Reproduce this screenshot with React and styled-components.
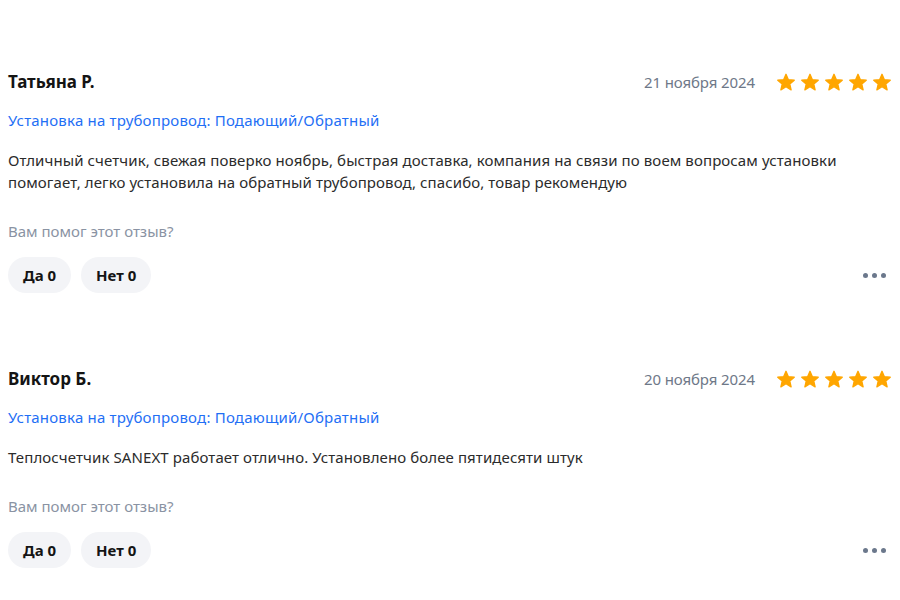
import React from "react";
import styled, { createGlobalStyle } from "styled-components";

const Global = createGlobalStyle`
  html, body { margin: 0; padding: 0; background: #ffffff; }
  body { font-family: "Noto Sans", "Open Sans", sans-serif; color: #2b2b2b; }
  * { box-sizing: border-box; }
`;

const List = styled.div`
  padding: 70px 8px 0 8px;
  width: 900px;
`;

const Review = styled.article`
  display: flex;
  flex-direction: column;
  margin-bottom: 74px;
  &:last-child { margin-bottom: 0; }
`;

const Header = styled.div`
  display: flex;
  align-items: center;
  justify-content: space-between;
  height: 24px;
`;

const Name = styled.div`
  font-size: 17px;
  font-weight: 700;
  color: #141414;
  line-height: 24px;
`;

const Meta = styled.div`
  display: flex;
  align-items: center;
  gap: 21px;
`;

const DateText = styled.span`
  font-size: 15px;
  letter-spacing: -0.1px;
  color: #6e7888;
  line-height: 20px;
`;

const Stars = styled.div`
  display: flex;
  gap: 4px;
`;

const Tag = styled.div`
  margin-top: 16px;
  font-size: 15px;
  letter-spacing: 0.2px;
  line-height: 20px;
  color: #1f6ff5;
`;

const Body = styled.p`
  margin: 19px 0 0;
  font-size: 15px;
  letter-spacing: 0.1px;
  line-height: 22px;
  color: #2b2b2b;
  max-width: 850px;
`;

const Question = styled.div`
  margin-top: 28px;
  font-size: 15px;
  line-height: 20px;
  color: #8a93a3;
`;

const Footer = styled.div`
  margin-top: 16px;
  display: flex;
  align-items: center;
  justify-content: space-between;
`;

const Votes = styled.div`
  display: flex;
  gap: 10px;
`;

const VoteButton = styled.button`
  height: 36px;
  padding: 0 15px;
  border: none;
  border-radius: 18px;
  background: #f3f4f7;
  font-family: inherit;
  font-size: 15px;
  font-weight: 700;
  color: #141414;
  cursor: pointer;
`;

const More = styled.button`
  display: flex;
  gap: 4px;
  padding: 0;
  margin-right: 6px;
  border: none;
  background: none;
  cursor: pointer;
`;

const Dot = styled.span`
  width: 5px;
  height: 5px;
  border-radius: 50%;
  background: #6b788c;
`;

const Star = () => (
  <svg width="20" height="19" viewBox="0 0 24 23">
    <path
      d="M12 1.5l2.9 6.6 7.1.6-5.4 4.7 1.6 7-6.2-3.7-6.2 3.7 1.6-7L2 8.7l7.1-.6z"
      fill="#ffa600"
      stroke="#ffa600"
      strokeWidth="1.6"
      strokeLinejoin="round"
    />
  </svg>
);

const reviews = [
  {
    name: "Татьяна Р.",
    date: "21 ноября 2024",
    text:
      "Отличный счетчик, свежая поверко ноябрь, быстрая доставка, компания на связи по воем вопросам установки помогает, легко установила на обратный трубопровод, спасибо, товар рекомендую",
  },
  {
    name: "Виктор Б.",
    date: "20 ноября 2024",
    text: "Теплосчетчик SANEXT работает отлично. Установлено более пятидесяти штук",
  },
];

export default function App() {
  return (
    <>
      <Global />
      <List>
        {reviews.map((r) => (
          <Review key={r.name}>
            <Header>
              <Name>{r.name}</Name>
              <Meta>
                <DateText>{r.date}</DateText>
                <Stars>
                  {[0, 1, 2, 3, 4].map((i) => (
                    <Star key={i} />
                  ))}
                </Stars>
              </Meta>
            </Header>
            <Tag>Установка на трубопровод: Подающий/Обратный</Tag>
            <Body>{r.text}</Body>
            <Question>Вам помог этот отзыв?</Question>
            <Footer>
              <Votes>
                <VoteButton>Да 0</VoteButton>
                <VoteButton>Нет 0</VoteButton>
              </Votes>
              <More aria-label="Ещё">
                <Dot />
                <Dot />
                <Dot />
              </More>
            </Footer>
          </Review>
        ))}
      </List>
    </>
  );
}
